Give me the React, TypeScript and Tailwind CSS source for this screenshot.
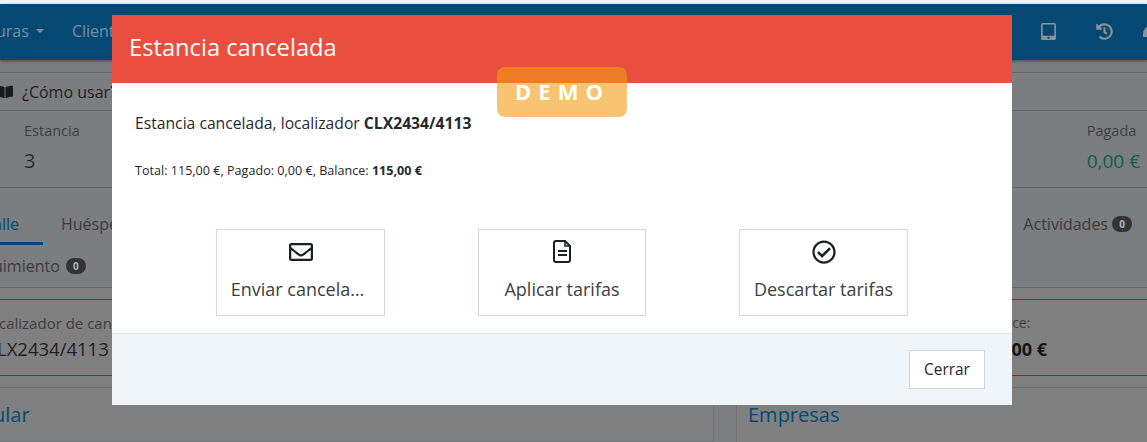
import React from "react";
import { FaBookOpen, FaHistory, FaRegCheckCircle, FaRegEnvelope, FaTabletAlt } from "react-icons/fa";

const font = { fontFamily: '"Open Sans", "Noto Sans", sans-serif' };

function Badge({ n }: { n: string }) {
  return (
    <span className="inline-flex h-[16px] w-[20px] items-center justify-center rounded-full bg-[#333333] text-[10px] font-bold text-[#b5b5b5]">
      {n}
    </span>
  );
}

function ActionButton({ icon, label, width, labelClass = "" }: { icon: React.ReactNode; label: string; width: string; labelClass?: string }) {
  return (
    <button className={`flex h-[87px] ${width} flex-col items-center border border-[#d3d8e0] bg-white pt-[9px] text-[18px] text-[#3c4045]`}>
      <span className="flex h-[25px] items-center justify-center">{icon}</span>
      <span className={`mt-[12px] whitespace-nowrap leading-[26px] ${labelClass}`}>{label}</span>
    </button>
  );
}

export default function App() {
  return (
    <div style={font} className="relative flex h-[442px] w-[1147px] flex-col overflow-hidden bg-[#808080] text-[#2a2a2a]">
      <div className="h-[4px] bg-[#f2f3f5]" />
      <nav className="z-10 flex h-[56px] items-center justify-between bg-[#044873] pb-[2px] text-[16px] text-[#7d8f9e] shadow-[0_1px_3px_rgba(0,0,0,0.45)]">
        <div className="flex items-center">
          <span className="ml-[-4px]">uras</span>
          <span className="ml-[7px] h-0 w-0 border-x-[4px] border-t-[4px] border-x-transparent border-t-[#8a9299]" />
          <span className="ml-[28px]">Clientes</span>
        </div>
        <div className="flex items-center text-[#8f9295]">
          <FaTabletAlt size={17} />
          <span className="ml-[39px]">
            <FaHistory size={17} />
          </span>
          <span className="ml-[30px] mr-[-12px] h-[11px] w-[16px] rounded-t-full bg-[#8f9295]" />
        </div>
      </nav>

      <div className="bg-[#7c7d80]">
        <div className="mt-[12px] flex h-[39px] items-center border-y border-[#66676a] text-[16px] text-[#1f1f1f]">
          <span className="ml-[-3px] flex items-center">
            <FaBookOpen size={16} color="#1a1a1a" />
            <span className="ml-[9px] whitespace-nowrap">¿Cómo usar?</span>
          </span>
        </div>

        <div className="flex h-[77px] items-start justify-between border-b border-[#636467] pl-[24px] pr-[7px] pt-[9px]">
          <div>
            <div className="text-[14.5px] leading-[22px] text-[#3d3e40]">Estancia</div>
            <div className="mt-[5px] text-[20px] leading-[28px] text-[#2c2d2f]">3</div>
          </div>
          <div>
            <div className="text-[14.5px] leading-[22px] text-[#3d3e40]">Pagada</div>
            <div className="mt-[5px] text-[19px] leading-[28px] text-[#0b5f52]">0,00 €</div>
          </div>
        </div>

        <div className="border-b border-[#66676a]">
          <div className="flex items-start justify-between pr-[15px] pt-[23px] text-[16px] text-[#3a3b3d]">
            <div className="flex">
              <span className="h-[34px] w-[43px] border-b-[3px] border-[#044873] leading-[26px] text-[#044873]">
                <span className="ml-[-7px]">alle</span>
              </span>
              <span className="ml-[18px] leading-[26px]">Huéspedes</span>
            </div>
            <span className="flex items-center gap-[4px] leading-[26px]">
              Actividades <Badge n="0" />
            </span>
          </div>
          <div className="flex h-[42px] items-center gap-[6px] text-[16px] text-[#3a3b3d]">
            <span className="ml-[-7px]">uimiento</span>
            <Badge n="0" />
          </div>
        </div>
      </div>

      <div className="mt-[11px] flex h-[77px] justify-between border-y border-[#7f2a2a] pt-[12px]">
        <div className="whitespace-nowrap">
          <div className="ml-[-1px] text-[15px] leading-[22px] text-[#3d3e40]">calizador de cancelación</div>
          <div className="ml-[-3px] mt-[2px] text-[18.5px] leading-[26px] text-[#1f2022]">LX2434/4113</div>
        </div>
        <div className="mr-[100px] text-left">
          <div className="text-[14px] leading-[22px] text-[#3d3e40]">Balance:</div>
          <div className="mt-[2px] text-[18px] font-bold leading-[26px] text-[#151515]">115,00 €</div>
        </div>
      </div>

      <div className="mt-[11px] flex flex-1 border-t border-[#6f7073] text-[20px] leading-[30px] text-[#044873]">
        <div className="w-[713px] border-b border-[#70757c] pt-[12px]">
          <span className="ml-[-7px]">ular</span>
        </div>
        <div className="w-[24px] border-x border-[#737478] bg-[#7d7e81]" />
        <div className="flex-1 pl-[11px] pt-[12px]">Empresas</div>
      </div>

      <div className="absolute left-[112px] top-[15px] z-20 flex h-[390px] w-[900px] flex-col bg-white">
        <header className="flex h-[68px] items-center bg-[#e94e3e] pb-[2px] pl-[17px] text-[23.7px] text-white">Estancia cancelada</header>
        <div className="h-[250px] px-[23px] pt-[28px] text-[#26292d]">
          <p className="text-[15.7px] leading-[24px]">
            Estancia cancelada, localizador <b>CLX2434/4113</b>
          </p>
          <p className="mt-[27px] text-[12.6px] leading-[18px]">
            Total: 115,00 €, Pagado: 0,00 €, Balance: <b>115,00 €</b>
          </p>
          <div className="mt-[49px] flex justify-between px-[81px]">
            <ActionButton width="w-[169px]" label="Enviar cancela…" labelClass="mr-[6px]" icon={<FaRegEnvelope size={24} color="#1c1f24" />} />
            <ActionButton
              width="w-[168px]"
              label="Aplicar tarifas"
              icon={
                <svg width="18" height="23" viewBox="0 0 18 23" fill="none" stroke="#1c1f24" strokeWidth="2">
                  <path d="M3 1h9l5 5v14a2 2 0 0 1-2 2H3a2 2 0 0 1-2-2V3a2 2 0 0 1 2-2Z" />
                  <path d="M12 1v5h5" strokeWidth="1.5" />
                  <path d="M5 11h9M5 15h9" />
                </svg>
              }
            />
            <ActionButton width="w-[169px]" label="Descartar tarifas" icon={<FaRegCheckCircle size={24} color="#1c1f24" />} />
          </div>
        </div>
        <footer className="flex h-[72px] items-center justify-end border-t border-[#dfe4ea] bg-[#f0f5fa] pr-[27px]">
          <button className="h-[39px] w-[76px] border border-[#ced6de] bg-white text-[15.4px] text-[#26292d]">Cerrar</button>
        </footer>
      </div>

      <div className="absolute left-[497px] top-[67px] z-30 flex h-[50px] w-[130px] items-center justify-center rounded-[8px] bg-[#f39c12]/60 pb-[2px] pl-[1px] text-[22px] font-bold tracking-[7px] text-white">
        DEMO
      </div>
    </div>
  );
}
